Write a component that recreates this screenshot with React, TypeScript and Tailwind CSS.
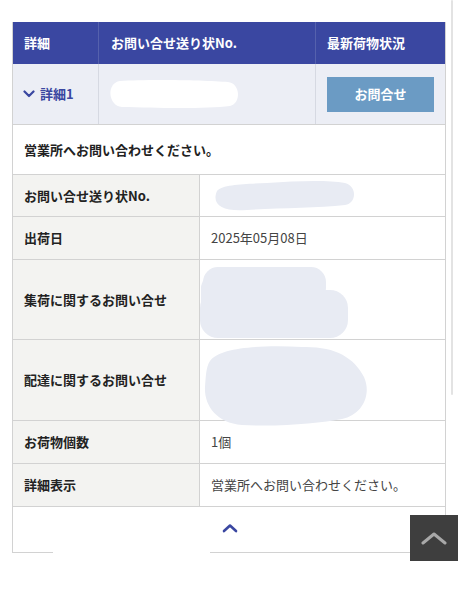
import React from "react";

const F = "font-['Noto_Sans_CJK_JP','Noto_Sans',sans-serif]";

function LabelRow({ label, value, h, children }: { label: string; value?: string; h: string; children?: React.ReactNode }) {
  return (
    <div className={`flex border-b border-[#d2d2d2] ${h}`}>
      <div className="w-[187px] shrink-0 bg-[#f3f3f1] border-r border-[#d2d2d2] flex items-center pl-[11px] text-[13px] font-bold text-[#222]">
        {label}
      </div>
      <div className="relative flex-1 flex items-center pl-[11px] text-[13px] text-[#444]">
        {value}
        {children}
      </div>
    </div>
  );
}

export default function App() {
  return (
    <div className={`relative w-[458px] h-[600px] bg-white overflow-hidden ${F}`}>
      <div className="pt-[22px] pl-[12px]">
        <div className="w-[434px] border-x border-[#d2d2d2]">
          {/* header */}
          <div className="flex h-[42px] bg-[#3a47a1] text-white font-bold text-[13px]">
            <div className="w-[86px] shrink-0 border-r border-[#5561ad] flex items-center pl-[11px]">詳細</div>
            <div className="w-[217px] shrink-0 border-r border-[#5561ad] flex items-center pl-[12px]">お問い合せ送り状No.</div>
            <div className="flex-1 flex items-center pl-[11px]">最新荷物状況</div>
          </div>
          {/* row 2 */}
          <div className="flex h-[61px] bg-[#eceef5] border-b border-[#d2d2d2]">
            <div className="w-[86px] shrink-0 border-r border-[#d6d9e2] flex items-center pl-[10px] text-[#3a47a1] font-bold text-[13px] gap-[5px]">
              <svg width="12" height="8" viewBox="0 0 12 8" fill="none">
                <path d="M1.5 1.5 L6 6 L10.5 1.5" stroke="#3a47a1" strokeWidth="2.2" strokeLinecap="round" strokeLinejoin="round" />
              </svg>
              <span>詳細1</span>
            </div>
            <div className="relative w-[217px] shrink-0 border-r border-[#d6d9e2]">
              <svg className="absolute left-[7px] top-[15px]" width="136" height="30" viewBox="0 0 136 30">
                <path d="M14 2 C40 0 100 1 122 3 C134 4 136 24 124 27 C100 30 50 29 16 28 C2 27 0 4 14 2 Z" fill="#ffffff" />
              </svg>
            </div>
            <div className="flex-1 flex items-center justify-center">
              <div className="w-[107px] h-[35px] bg-[#6b9bc4] text-white font-bold text-[13px] flex items-center justify-center">お問合せ</div>
            </div>
          </div>
          {/* message */}
          <div className="h-[50px] border-b border-[#d2d2d2] flex items-center pl-[11px] text-[13px] font-bold text-[#222]">
            営業所へお問い合わせください。
          </div>
          <LabelRow label="お問い合せ送り状No." h="h-[42px]">
            <svg className="absolute left-[7px] top-[4px]" width="150" height="34" viewBox="0 0 150 34">
              <path d="M10 12 C16 5 40 5 60 4 C90 2 120 1 138 4 C150 7 150 24 138 26 C110 29 70 29 40 31 C16 33 4 26 10 12 Z" fill="#e8ebf3" />
            </svg>
          </LabelRow>
          <LabelRow label="出荷日" value="2025年05月08日" h="h-[43px]" />
          <LabelRow label="集荷に関するお問い合せ" h="h-[80px]">
            <svg className="absolute left-[0px] top-[6px]" width="152" height="74" viewBox="0 0 152 74">
              <rect x="3" y="1" width="123" height="36" rx="15" fill="#e8ebf3" />
              <rect x="0" y="24" width="148" height="48" rx="18" fill="#e8ebf3" />
              <rect x="1" y="10" width="40" height="50" rx="12" fill="#e8ebf3" />
            </svg>
          </LabelRow>
          <LabelRow label="配達に関するお問い合せ" h="h-[81px]">
            <svg className="absolute left-[2px] top-[3px] overflow-visible" width="168" height="84" viewBox="0 0 168 84">
              <path d="M8 18 C18 4 60 2 100 4 C132 3 152 14 162 34 C170 52 160 72 140 76 C118 80 80 84 40 82 C14 80 2 62 3 44 C4 32 4 24 8 18 Z" fill="#e8ebf3" />
            </svg>
          </LabelRow>
          <LabelRow label="お荷物個数" value="1個" h="h-[43px]" />
          <LabelRow label="詳細表示" value="営業所へお問い合わせください。" h="h-[43px]" />
          {/* footer */}
          <div className="h-[46px] border-b border-[#d2d2d2] flex justify-center pt-[16px]">
            <svg width="16" height="10" viewBox="0 0 16 10" fill="none" className="ml-[1px]">
              <path d="M2 8 L8 2.5 L14 8" stroke="#3a47a1" strokeWidth="2.6" strokeLinecap="round" strokeLinejoin="round" />
            </svg>
          </div>
        </div>
      </div>
      {/* white gap over bottom border */}
      <div className="absolute left-[53px] top-[550px] w-[157px] h-[6px] bg-white" />
      {/* scrollbar */}
      <div className="absolute left-[451px] top-0 w-[2px] h-[395px] bg-[#e3e3e3] rounded" />
      {/* back to top */}
      <div className="absolute left-[410px] top-[515px] w-[48px] h-[46px] bg-[#3e3e3e] flex items-center justify-center">
        <svg width="26" height="14" viewBox="0 0 26 14" fill="none">
          <path d="M2 12 L13 3 L24 12" stroke="#a8a8a8" strokeWidth="3" strokeLinecap="round" strokeLinejoin="round" />
        </svg>
      </div>
    </div>
  );
}
